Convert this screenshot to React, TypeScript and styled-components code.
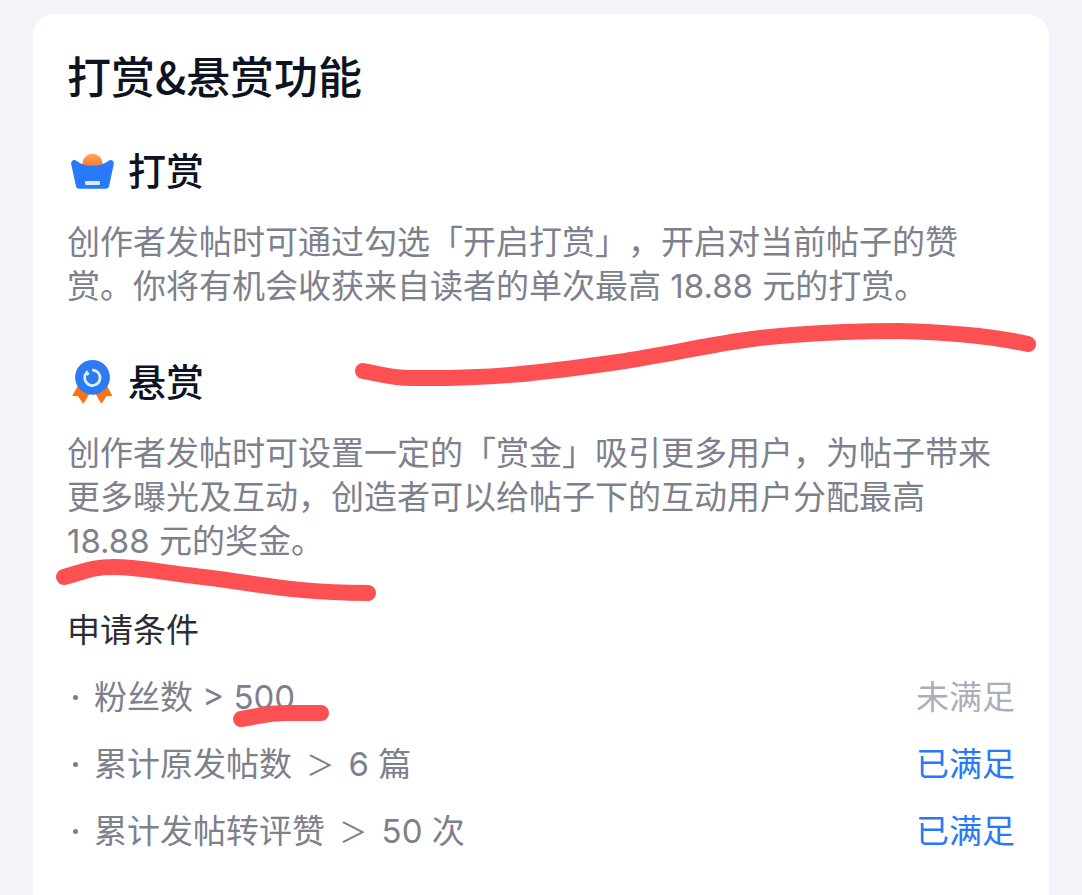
import React from 'react';
import styled, { createGlobalStyle } from 'styled-components';

const GlobalStyle = createGlobalStyle`
  * { box-sizing: border-box; }
  body {
    margin: 0;
    background: #f3f4f9;
    font-family: Inter, "Noto Sans CJK SC", sans-serif;
    text-spacing-trim: space-all;
  }
`;

const Page = styled.main`
  display: flex;
  min-height: 100vh;
  padding: 14px 33px 0;
`;

const Card = styled.article`
  flex: 1;
  min-width: 0;
  padding: 34px 34px 40px;
  background: #fff;
  border-radius: 22px 22px 0 0;
`;

const Title = styled.h1`
  margin: 0 0 44px;
  font-family: "Noto Sans CJK SC", sans-serif;
  font-size: 44px;
  line-height: 54px;
  font-weight: 500;
  color: #0e1324;
`;

const Section = styled.section<{ $gap: number }>`
  position: relative;
  margin-bottom: ${(p) => p.$gap}px;
`;

const Heading = styled.h2`
  display: flex;
  align-items: center;
  gap: 11px;
  height: 50px;
  margin: 0 0 24px;
  font-size: 38px;
  line-height: 48px;
  font-weight: 500;
  color: #0e1324;
`;

const Icon = styled.svg`
  flex: none;
  width: 50px;
  height: 50px;
`;

const Text = styled.p`
  margin: 0;
  font-size: 33px;
  line-height: 44px;
  color: #7e808c;
`;

const Subheading = styled.h3`
  margin: 0 0 23px;
  font-size: 33px;
  line-height: 44px;
  font-weight: 400;
  color: #2c2d33;
`;

const Conditions = styled.ul`
  display: flex;
  flex-direction: column;
  gap: 23px;
  margin: 0;
  padding: 0;
  list-style: none;
`;

const Condition = styled.li`
  display: flex;
  align-items: center;
  font-size: 33px;
  line-height: 44px;
  color: #7e808c;
`;

const Operator = styled.span`
  margin: 0 5px;
  font-size: 28px;
  line-height: 1;
`;

const Bullet = styled.span`
  flex: none;
  width: 5px;
  height: 5px;
  margin: 0 16px 0 6px;
  border-radius: 50%;
  background: #7b7d8a;
`;

const Status = styled.span<{ $met: boolean }>`
  margin-left: auto;
  color: ${(p) => (p.$met ? '#2878f8' : '#adaeba')};
`;

const Marker = styled.svg<{ $left: number; $top: number }>`
  position: absolute;
  left: ${(p) => p.$left}px;
  top: ${(p) => p.$top}px;
  overflow: visible;
  pointer-events: none;
  fill: none;
  stroke: #fd5052;
  stroke-width: 16px;
  stroke-linecap: round;
  stroke-linejoin: round;
`;

const conditions = [
  { key: 'fans', label: <>粉丝数 &gt; 500</>, met: false },
  { key: 'posts', label: <>累计原发帖数 <Operator>＞</Operator> 6 篇</>, met: true },
  { key: 'engagement', label: <>累计发帖转评赞 <Operator>＞</Operator> 50 次</>, met: true },
];

function TipIcon() {
  return (
    <Icon viewBox="0 0 50 50" aria-hidden="true">
      <defs>
        <linearGradient id="coin" x1="0" y1="0" x2="0" y2="1">
          <stop offset="0" stopColor="#ffa366" />
          <stop offset="0.6" stopColor="#f57f2e" />
        </linearGradient>
      </defs>
      <circle cx="25.5" cy="18" r="10.2" fill="url(#coin)" />
      <path
        d="M4.2 18.2C3.5 14.8 7 12.8 9.6 14.9C19 21.5 32 21.5 41.4 14.9C44 12.8 47.5 14.8 46.8 18.2L42.2 39.5C41.7 41.8 40.6 42.8 38.4 42.8H12.6C10.4 42.8 9.3 41.8 8.8 39.5Z"
        fill="#287afb"
      />
      <rect x="18" y="35" width="15" height="4" rx="1.2" fill="#d5efff" />
    </Icon>
  );
}

function BountyIcon() {
  return (
    <Icon viewBox="0 0 50 50" aria-hidden="true">
      <path d="M12 27L5.4 38.2Q5.2 39 6 39L11 39.2L15.4 45.8Q16.6 46.8 17.3 45.6L24 34Z" fill="#fb7318" />
      <path d="M39 27L45 38.2Q45.2 39 44.4 39L39.5 39.2L35.2 45.8Q34.2 46.8 33.5 45.6L27 34Z" fill="#fb7318" />
      <circle cx="25.5" cy="20.3" r="17.4" fill="#2d7bf2" />
      <path d="M25.2 13.1A7.7 7.7 0 1 1 19.9 15.4L21.4 18" fill="none" stroke="#d9f0ff" strokeWidth="2.7" />
    </Icon>
  );
}

export default function App() {
  return (
    <>
      <GlobalStyle />
      <Page>
        <Card>
          <Title>打赏&amp;悬赏功能</Title>
          <Section $gap={49}>
            <Heading>
              <TipIcon />
              打赏
            </Heading>
            <Text>
              创作者发帖时可通过勾选「开启打赏」，开启对当前帖子的赞赏。你将有机会收获来自读者的单次最高 18.88 元的打赏。
            </Text>
            <Marker $left={288} $top={177} width="682" height="64" aria-hidden="true">
              <path d="M8 48C30 52 37 55 57 55C137 56 185 50 263 39C325 30 375 16 437 12C475 9 505 8 544 8C595 9 640 14 673 21" />
            </Marker>
          </Section>
          <Section $gap={45}>
            <Heading>
              <BountyIcon />
              悬赏
            </Heading>
            <Text>
              创作者发帖时可设置一定的「赏金」吸引更多用户，为帖子带来更多曝光及互动，创造者可以给帖子下的互动用户分配最高 18.88 元的奖金。
            </Text>
            <Marker $left={-11} $top={202} width="320" height="44" aria-hidden="true">
              <path d="M8 18C30 12 36 8 58 8C82 8 96 12 130 16C190 22 232 34 312 34" />
            </Marker>
          </Section>
          <Section $gap={0}>
            <Subheading>申请条件</Subheading>
            <Conditions>
              {conditions.map(({ key, label, met }) => (
                <Condition key={key}>
                  <Bullet />
                  <span>{label}</span>
                  <Status $met={met}>{met ? '已满足' : '未满足'}</Status>
                </Condition>
              ))}
            </Conditions>
            <Marker $left={166} $top={97} width="98" height="24" aria-hidden="true">
              <path d="M8 14C28 11 32 8 54 8H88" />
            </Marker>
          </Section>
        </Card>
      </Page>
    </>
  );
}
